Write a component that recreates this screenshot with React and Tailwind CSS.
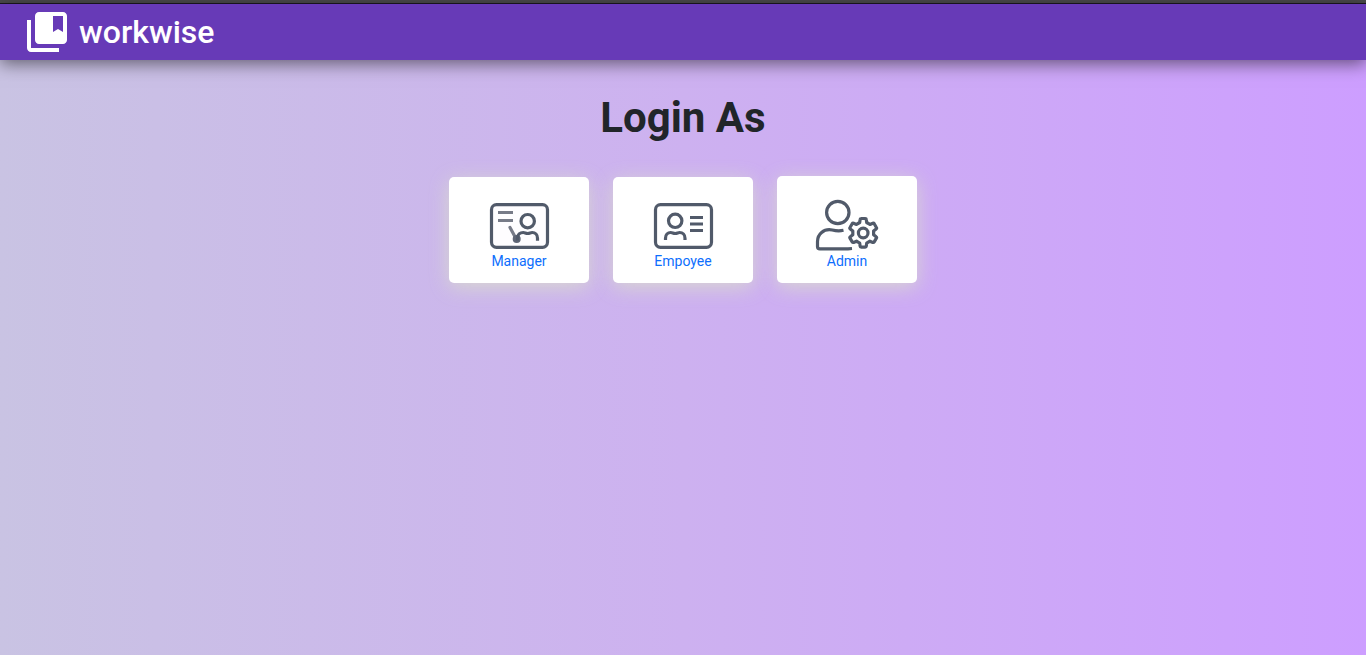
import React from "react";

function BookmarkLogo() {
  return (
    <svg viewBox="0 0 24 24" className="size-12 fill-white" aria-hidden="true">
      <path d="M4 6H2v14c0 1.1.9 2 2 2h14v-2H4V6z" />
      <path d="M20 2H8c-1.1 0-2 .9-2 2v12c0 1.1.9 2 2 2h12c1.1 0 2-.9 2-2V4c0-1.1-.9-2-2-2zm0 10l-2.500-1.500L15 12V4h5v8z" />
    </svg>
  );
}

function ManagerIcon() {
  return (
    <svg viewBox="0 0 64 51" className="h-[51px] w-16" fill="none" stroke="#515a6a" strokeWidth="3.200" aria-hidden="true">
      <rect x="4.500" y="4.700" width="56" height="42.600" rx="5" fill="#fefdff" />
      <path d="M11 12.500h15M11 20.500h15" stroke="#777b88" strokeWidth="3" />
      <path d="M23 27.500l6.500 12" stroke="#777b88" strokeLinecap="round" />
      <circle cx="29.700" cy="39" r="4" fill="#5f6676" stroke="none" />
      <circle cx="40.700" cy="21.200" r="6.700" />
      <path d="M30.500 40.500v-2.300c0-3.500 2.600-5.700 5.800-5.700 1.500 0 2.500 1 4.400 1s2.900-1 4.400-1c3.200 0 5.400 2.200 5.400 5.700v2.600" />
    </svg>
  );
}

function EmployeeIcon() {
  return (
    <svg viewBox="0 0 64 51" className="h-[51px] w-16" fill="none" stroke="#515a6a" strokeWidth="3.200" aria-hidden="true">
      <rect x="4.500" y="4.700" width="56" height="42.600" rx="5" />
      <circle cx="24.200" cy="20.800" r="6.700" />
      <path d="M14.500 40v-1.800c0-3.500 2.200-5.700 5.300-5.700 1.500 0 2.500 1 4.400 1s2.900-1 4.400-1c3.100 0 5.400 2.200 5.400 5.700V40" />
      <path d="M39 17.500h13M39 24h13M39 30.500h13" strokeWidth="3" />
    </svg>
  );
}

function AdminIcon() {
  return (
    <svg viewBox="0 0 64 52" className="h-[52px] w-16" fill="none" stroke="#515a6a" strokeWidth="3.200" strokeLinejoin="round" aria-hidden="true">
      <circle cx="22.800" cy="13.500" r="11.200" />
      <path d="M28.500 31.300c-3.800.8-7.500.6-11.200-.3C8.500 29.300 2.500 35.500 2.500 42.500v5c0 1.500.8 2.300 2.300 2.300H33l4-.3" />
      <path d="M46.200 19.500h4q1 0 1.100 1l.4 3 3.200 1.900 2.900-1.200q.9-.3 1.400.5l2.200 3.800q.5.800-.3 1.400l-2.500 2v3.800l2.500 2q.8.600.3 1.400l-2.200 3.800q-.5.800-1.400.5l-2.900-1.200-3.200 1.900-.4 3q-.1 1-1.100 1h-4q-1 0-1.100-1l-.4-3-3.200-1.900-2.900 1.200q-.9.300-1.400-.5L35 39.100q-.5-.8.300-1.400l2.500-2v-3.800l-2.500-2q-.8-.6-.3-1.400l2.200-3.800q.5-.8 1.400-.5l2.900 1.200 3.200-1.900.4-3q.1-1 1.400-1z" />
      <circle cx="48.200" cy="34" r="4.800" />
    </svg>
  );
}

const roles = [
  { name: "Manager", Icon: ManagerIcon },
  { name: "Empoyee", Icon: EmployeeIcon },
  { name: "Admin", Icon: AdminIcon },
];

export default function App() {
  return (
    <div className="min-h-screen bg-linear-to-r from-[#c9c3e3] via-[#cdb1f0] to-[#cd9eff] font-['Roboto',sans-serif]">
      <div className="h-1 border-b border-[#1c1820] bg-[#4a4a4a]" />
      <header className="flex h-14 items-center gap-2 bg-[#673ab7] px-[23px] text-white shadow-[0_4px_16px_rgba(0,0,0,0.5)]">
        <BookmarkLogo />
        <span className="text-[32px] leading-8 font-medium">workwise</span>
      </header>
      <main className="flex flex-col items-center pt-8">
        <h1 className="text-[42px] leading-[52px] font-bold text-[#212529]">Login As</h1>
        <nav aria-label="Login roles" className="mt-8 flex flex-wrap items-end justify-center gap-6">
          {roles.map(({ name, Icon }) => (
            <a
              key={name}
              href={"#" + name.toLowerCase()}
              className="flex w-[140px] flex-col items-center rounded-[5px] bg-white pt-[23px] pb-3 text-sm text-[#0d6efd] shadow-[0_4px_20px_rgba(220,225,200,0.8)]"
            >
              <Icon />
              {name}
            </a>
          ))}
        </nav>
      </main>
    </div>
  );
}
